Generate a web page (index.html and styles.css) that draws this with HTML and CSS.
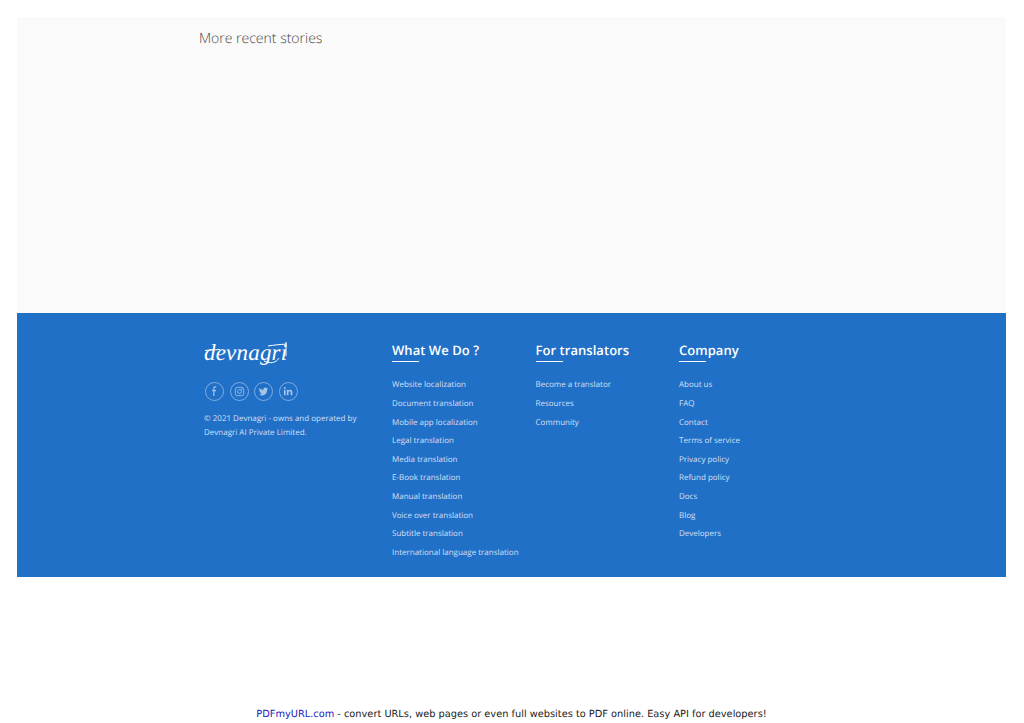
FILE: index.html
```html
<!DOCTYPE html>
<html>
<head>
    <title>Devnagri</title>
    <link rel="stylesheet" href="styles.css">
</head>
<body>
    <div class="page">
        <section class="stories">
            <h2>More recent stories</h2>
        </section>

        <footer class="footer">
            <div class="brand">
                <div class="logo">
                    <svg class="logo-line" width="86" height="28" viewBox="0 0 86 28" fill="none" stroke="#fff" stroke-width="1">
                        <path d="M1 11.500C6 11 10 11 16 10.500"/>
                        <path d="M64 7C70 6 76 5.500 83 5"/>
                        <path d="M82 3V17"/>
                        <path d="M60 22C66 25 72 24 75 19"/>
                    </svg>
                    <span class="logo-text">devnagri</span>
                </div>
                <div class="social">
                    <span class="social-icon">
                        <svg width="18" height="18" viewBox="0 0 18 18" fill="none" stroke="#fff" stroke-width="1.400"><path d="M11 3.500H9.800C8.700 3.500 8.200 4.200 8.200 5.200V14.500M6.200 8H10.800"/></svg>
                    </span>
                    <span class="social-icon">
                        <svg width="18" height="18" viewBox="0 0 18 18" fill="none" stroke="#fff" stroke-width="1"><rect x="4" y="4" width="10" height="10" rx="2.500"/><circle cx="9" cy="9" r="2.300"/><circle cx="11.800" cy="6.200" r=".4"/></svg>
                    </span>
                    <span class="social-icon">
                        <svg width="18" height="18" viewBox="0 0 18 18" fill="#fff"><path d="M14.500 5.300c-.4.200-.8.300-1.300.4.500-.3.800-.7 1-1.200-.4.300-.9.400-1.400.5-.9-1-2.500-1-3.400 0-.6.600-.8 1.400-.6 2.200-1.800-.1-3.500-1-4.600-2.400-.6 1-.3 2.400.7 3.100-.4 0-.7-.1-1-.3 0 1.200.8 2.200 1.900 2.400-.3.100-.7.100-1 0 .3 1 1.200 1.700 2.200 1.700-.9.700-2.100 1.100-3.300.9 3.900 2.500 9.500.6 9.700-5.800.3-.1.700-.5 1.100-1z"/></svg>
                    </span>
                    <span class="social-icon">
                        <svg width="18" height="18" viewBox="0 0 18 18" fill="#fff"><rect x="3.500" y="7" width="2" height="6.500"/><circle cx="4.500" cy="4.900" r="1.200"/><path d="M7 7h1.900v.9c.4-.7 1.200-1.100 2.100-1.100 2 0 2.600 1.300 2.600 3.100v3.600h-2V10.300c0-.9-.2-1.700-1.200-1.700s-1.400.8-1.400 1.700v3.200H7z"/></svg>
                    </span>
                </div>
                <p class="copyright">© 2021 Devnagri - owns and operated by Devnagri AI Private Limited.</p>
            </div>

            <div class="links">
                <h3>What We Do ?</h3>
                <a href="#">Website localization</a>
                <a href="#">Document translation</a>
                <a href="#">Mobile app localization</a>
                <a href="#">Legal translation</a>
                <a href="#">Media translation</a>
                <a href="#">E-Book translation</a>
                <a href="#">Manual translation</a>
                <a href="#">Voice over translation</a>
                <a href="#">Subtitle translation</a>
                <a href="#">International language translation</a>
            </div>

            <div class="links">
                <h3>For translators</h3>
                <a href="#">Become a translator</a>
                <a href="#">Resources</a>
                <a href="#">Community</a>
            </div>

            <div class="links">
                <h3>Company</h3>
                <a href="#">About us</a>
                <a href="#">FAQ</a>
                <a href="#">Contact</a>
                <a href="#">Terms of service</a>
                <a href="#">Privacy policy</a>
                <a href="#">Refund policy</a>
                <a href="#">Docs</a>
                <a href="#">Blog</a>
                <a href="#">Developers</a>
            </div>
        </footer>

        <p class="pdf-note"><a href="#">PDFmyURL.com</a> - convert URLs, web pages or even full websites to PDF online. Easy API for developers!</p>
    </div>
</body>
</html>
```

FILE: styles.css
```css
html, body { margin: 0; padding: 0; background: #fff; }
body { font-family: "Open Sans", sans-serif; overflow: hidden; text-rendering: geometricPrecision; }
.page { height: 723px; box-sizing: border-box; padding: 17px 18px 0 17px; display: flex; flex-direction: column; }

.stories { height: 296px; box-sizing: border-box; background: #fafafa; padding: 12px 0 0 182px; }
.stories h2 { margin: 0; font-size: 14px; line-height: 20px; font-weight: 300; color: #444; }

.footer { height: 264px; box-sizing: border-box; background: #2170c8; padding: 27px 0 0 187px; display: flex; color: #fff; }
.brand { width: 188px; }
.logo { position: relative; height: 28px; }
.logo-line { position: absolute; left: 0; top: -1px; }
.logo-text { position: relative; top: -1px; font-family: "Liberation Serif", serif; font-style: italic; font-size: 23px; line-height: 28px; color: #fff; letter-spacing: .2px; }

.social { display: flex; gap: 5.500px; margin: 14px 0 0 1px; }
.social-icon { width: 17px; height: 17px; border: 1px solid rgba(255,255,255,.55); border-radius: 50%; display: flex; align-items: center; justify-content: center; opacity: .75; }
.social-icon svg { width: 15px; height: 15px; opacity: .8; }

.copyright { margin: 11px 0 0; width: 160px; font-size: 8px; line-height: 14px; color: rgba(255,255,255,.8); }

.links { width: 143.500px; display: flex; flex-direction: column; }
.links h3 { margin: 0 0 15.200px; font-size: 13px; line-height: 20px; font-weight: 600; letter-spacing: .05px; color: #fff; position: relative; padding-bottom: 1px; }
.links h3::after { content: ""; position: absolute; left: 0; bottom: -1px; width: 27px; height: 1px; background: #fff; }
.links a { font-size: 8px; line-height: 18.650px; color: rgba(255,255,255,.8); text-decoration: none; white-space: nowrap; }

.pdf-note { margin: auto 0 0; padding-bottom: 2px; font-family: "DejaVu Sans", sans-serif; font-size: 9.800px; line-height: 12px; color: #222; text-align: center; }
.pdf-note a { color: #2222bb; text-decoration: none; }
```
